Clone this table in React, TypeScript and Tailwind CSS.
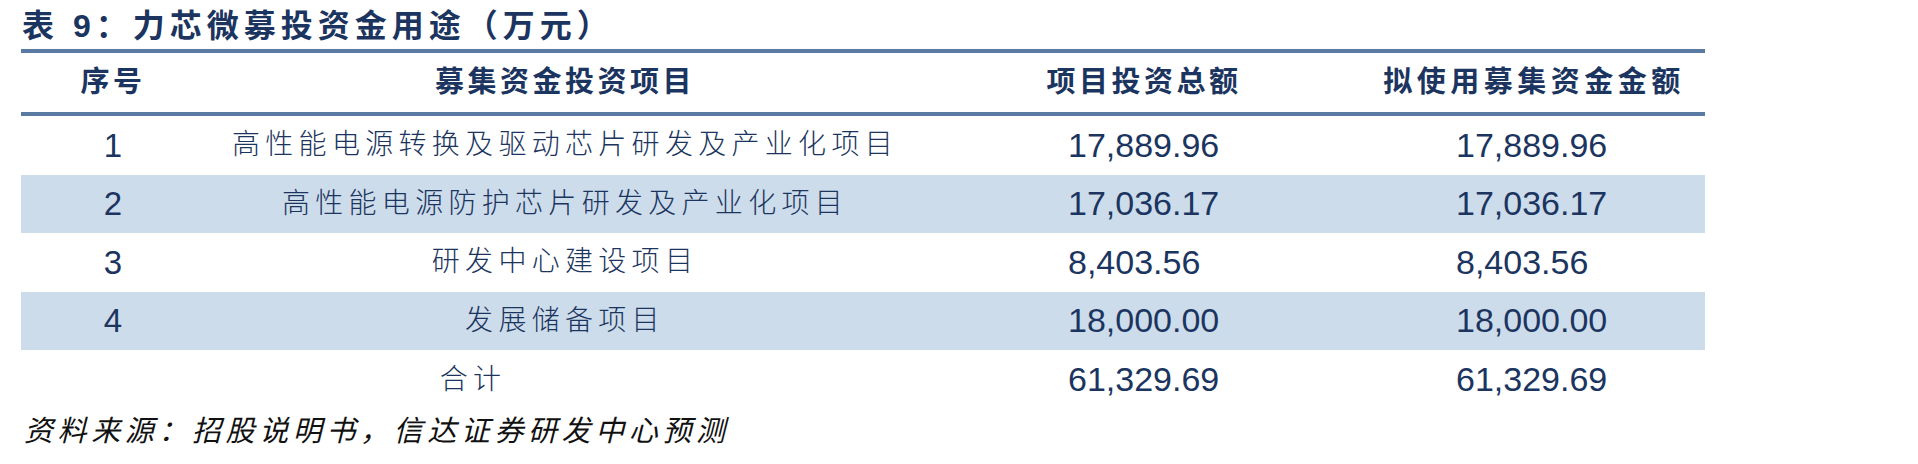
const rows = [
  { no: "1", name: "高性能电源转换及驱动芯片研发及产业化项目", total: "17,889.96", used: "17,889.96" },
  { no: "2", name: "高性能电源防护芯片研发及产业化项目", total: "17,036.17", used: "17,036.17" },
  { no: "3", name: "研发中心建设项目", total: "8,403.56", used: "8,403.56" },
  { no: "4", name: "发展储备项目", total: "18,000.00", used: "18,000.00" },
];

const cjk = "font-['Liberation_Sans','Noto_Sans_CJK_SC',sans-serif]";

export default function App() {
  return (
    <div className={`w-[1918px] h-[464px] bg-white text-[#1b3560] ${cjk}`}>
      <div className="pl-[22px] pt-[6px] h-[49px] text-[32px] leading-[40px] font-bold tracking-[5px]">
        表 9：力芯微募投资金用途（万元）
      </div>

      <div className="ml-[21px] w-[1684px]">
        <div className="h-[4px] bg-[#5a7aa3]" />
        <div className="flex h-[59px] items-center text-[29px] font-bold tracking-[3.5px]">
          <div className="w-[184px] text-center">序号</div>
          <div className="w-[720px] text-center">募集资金投资项目</div>
          <div className="w-[438px] text-center">项目投资总额</div>
          <div className="w-[342px] text-center tracking-[4.5px]">拟使用募集资金金额</div>
        </div>
        <div className="h-[4px] bg-[#5a7aa3]" />

        {rows.map((r, i) => (
          <div
            key={r.no}
            className={`flex h-[58.5px] items-center ${i % 2 === 1 ? "bg-[#cddceb]" : ""}`}
          >
            <div className="w-[184px] text-center text-[33px]">{r.no}</div>
            <div className="w-[720px] text-center text-[28px] tracking-[5.3px] font-light">{r.name}</div>
            <div className="w-[438px] pl-[143px] text-[34px]">{r.total}</div>
            <div className="w-[342px] pl-[93px] text-[34px]">{r.used}</div>
          </div>
        ))}

        <div className="flex h-[59px] items-center">
          <div className="w-[904px] text-center text-[28px] tracking-[5.3px] font-light">合计</div>
          <div className="w-[438px] pl-[143px] text-[34px]">61,329.69</div>
          <div className="w-[342px] pl-[93px] text-[34px]">61,329.69</div>
        </div>
      </div>

      <div className="pl-[24px] pt-[2px] text-[29px] leading-[40px] italic tracking-[4.6px] text-[#111]">
        资料来源：招股说明书，信达证券研发中心预测
      </div>
    </div>
  );
}
